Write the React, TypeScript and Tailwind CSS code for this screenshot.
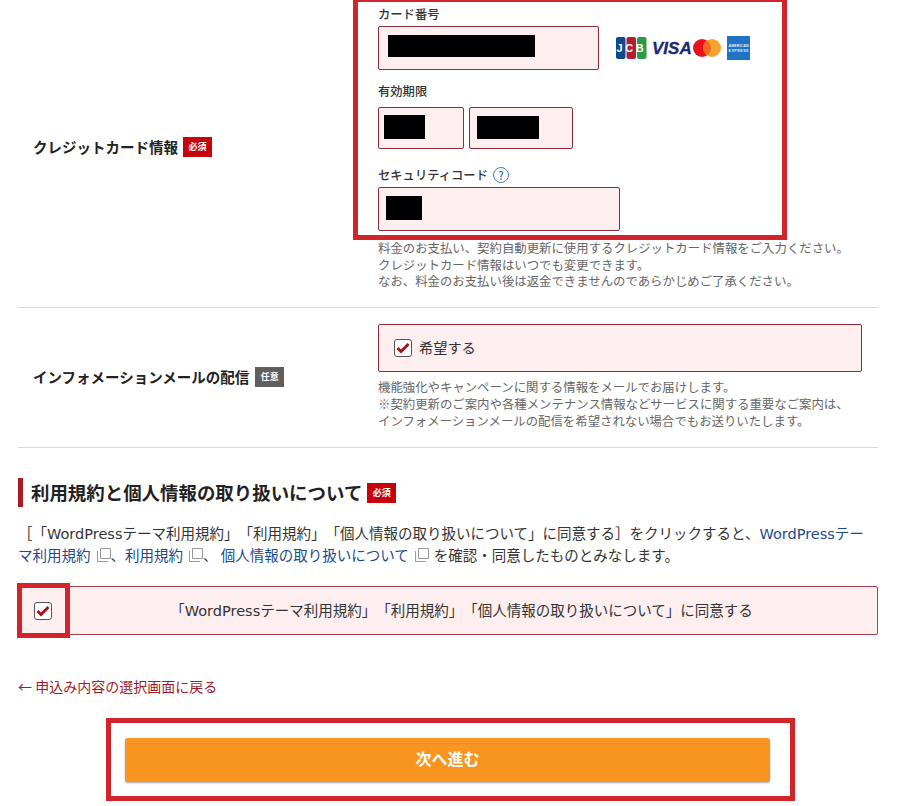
const font = { fontFamily: '"Noto Sans CJK JP", "Liberation Sans", sans-serif' }

function Badge({ label, gray }: { label: string; gray?: boolean }) {
  return (
    <span className={`inline-flex items-center justify-center w-[29px] h-[20px] text-[9px] font-bold text-white leading-none ${gray ? 'bg-[#5f5f5f]' : 'bg-[#c4030d]'}`}>
      {label}
    </span>
  )
}

function Field({ className, block }: { className: string; block: string }) {
  return (
    <div className={`relative border border-[#8e2b38] rounded-[2px] bg-[#fdeeef] ${className}`}>
      <div className={`absolute bg-black ${block}`} />
    </div>
  )
}

function Check({ className = '' }: { className?: string }) {
  return (
    <span className={`flex items-center justify-center w-[18px] h-[18px] shrink-0 rounded-[3px] border border-[#555] bg-white ${className}`}>
      <svg width="14" height="12" viewBox="0 0 14 12">
        <path d="M1.5 6 L5 9.5 L12.5 2" fill="none" stroke="#a8101c" strokeWidth="3" />
      </svg>
    </span>
  )
}

function ExtIcon({ className = '' }: { className?: string }) {
  return (
    <svg className={`inline-block ml-[6px] align-[-1px] ${className}`} width="14" height="14" viewBox="0 0 14 14">
      <path d="M3.5 0.5 H13.5 V10.5 H3.5 Z" fill="none" stroke="#9a9a9a" />
      <path d="M0.5 3 V13.5 H11" fill="none" stroke="#9a9a9a" />
    </svg>
  )
}

function Latin({ children }: { children: string }) {
  return <span className="font-['DejaVu_Sans'] text-[14.5px] leading-none">{children}</span>
}

function CardLogos() {
  return (
    <svg width="136" height="26" viewBox="0 0 136 26">
      <rect x="1" y="2" width="9.5" height="22" rx="2" fill="#0d4b8f" />
      <rect x="11.5" y="2" width="9.5" height="22" rx="2" fill="#b0202f" />
      <rect x="22" y="2" width="9.5" height="22" rx="2" fill="#2f9a45" />
      <text x="16.5" y="17" textAnchor="middle" fontSize="11" fontWeight="700" fill="#fff" letterSpacing="2.6" fontFamily="Liberation Sans">JCB</text>
      <text x="37" y="19" fontSize="17" fontWeight="700" fontStyle="italic" fill="#1a2a6c" stroke="#1a2a6c" strokeWidth="0.3" fontFamily="Liberation Sans">VISA</text>
      <circle cx="87" cy="13" r="9" fill="#e8101a" />
      <circle cx="97" cy="13" r="9" fill="#f6a331" />
      <path d="M92 5.5 A9 9 0 0 1 92 20.5 A9 9 0 0 1 92 5.5 Z" fill="#f4691f" />
      <rect x="112" y="1" width="23" height="24" fill="#1f72c4" />
      <text x="113.5" y="12" fontSize="3.6" fontWeight="700" fill="#e4eff9" textLength="20" fontFamily="Liberation Sans">AMERICAN</text>
      <text x="113.5" y="17" fontSize="3.6" fontWeight="700" fill="#e4eff9" textLength="20" fontFamily="Liberation Sans">EXPRESS</text>
    </svg>
  )
}

export default function App() {
  return (
    <div className="relative w-[903px] h-[806px] overflow-hidden bg-white text-[#333] [text-spacing-trim:space-all]" style={font}>
      <div className="ml-[18px] w-[860px]">
        <div className="flex h-[308px] border-b border-[#d9d9d9]">
          <div className="w-[360px] shrink-0 pl-[15px] flex items-center gap-[5px] pb-[14px]">
            <span className="text-[14.5px] font-bold text-[#222]">クレジットカード情報</span>
            <Badge label="必須" />
          </div>
          <div className="pt-[6px]">
            <p className="text-[12.3px] leading-[16px] font-medium">カード番号</p>
            <div className="flex items-center mt-[4px]">
              <Field className="w-[221px] h-[44px]" block="left-[9px] top-[8px] w-[147px] h-[22px]" />
              <div className="ml-[16px]"><CardLogos /></div>
            </div>
            <p className="mt-[13px] text-[12.3px] leading-[16px] font-medium">有効期限</p>
            <div className="flex gap-[5px] mt-[8px]">
              <Field className="w-[86px] h-[42px]" block="left-[5px] top-[7px] w-[41px] h-[24px]" />
              <Field className="w-[104px] h-[42px]" block="left-[7px] top-[8px] w-[62px] h-[23px]" />
            </div>
            <p className="mt-[17px] text-[12.3px] leading-[18px] font-medium flex items-center gap-[5px]">
              セキュリティコード
              <span className="flex items-center justify-center w-[16px] h-[16px] rounded-full border border-[#4a7fa8] text-[11px] leading-none text-[#2a6a9a]">?</span>
            </p>
            <Field className="w-[242px] h-[44px] mt-[3px]" block="left-[7px] top-[8px] w-[36px] h-[24px]" />
            <div className="mt-[9px] text-[12.4px] leading-[16.5px] text-[#666] whitespace-nowrap">
              <p>料金のお支払い、契約自動更新に使用するクレジットカード情報をご入力ください。</p>
              <p>クレジットカード情報はいつでも変更できます。</p>
              <p>なお、料金のお支払い後は返金できませんのであらかじめご了承ください。</p>
            </div>
          </div>
        </div>

        <div className="flex h-[140px] border-b border-[#d9d9d9]">
          <div className="w-[360px] shrink-0 pl-[15px] flex items-center gap-[6px] pb-[2px]">
            <span className="text-[14.5px] font-bold text-[#222]">インフォメーションメールの配信</span>
            <Badge label="任意" gray />
          </div>
          <div className="pt-[16px]">
            <div className="flex items-center gap-[7px] w-[484px] h-[48px] pl-[15px] pb-[1px] border border-[#8e2b38] rounded-[2px] bg-[#fdeeef]">
              <Check />
              <span className="text-[14.2px]">希望する</span>
            </div>
            <div className="mt-[7px] text-[12.4px] leading-[17px] text-[#666] whitespace-nowrap">
              <p>機能強化やキャンペーンに関する情報をメールでお届けします。</p>
              <p>※契約更新のご案内や各種メンテナンス情報などサービスに関する重要なご案内は、</p>
              <p>インフォメーションメールの配信を希望されない場合でもお送りいたします。</p>
            </div>
          </div>
        </div>

        <div className="flex items-center mt-[30px] h-[29px] border-l-[5px] border-[#a81b25] pl-[8px] gap-[5px]">
          <h2 className="text-[18.45px] font-bold text-[#222]">利用規約と個人情報の取り扱いについて</h2>
          <Badge label="必須" />
        </div>

        <div className="mt-[15px] text-[14.5px] leading-[22px] text-[#333] whitespace-nowrap">
          <p>［「<Latin>WordPress</Latin>テーマ利用規約」「利用規約」「個人情報の取り扱いについて」に同意する］をクリックすると、<span className="text-[#1c4a8c]"><Latin>WordPress</Latin>テー</span></p>
          <p>
            <span className="text-[#1c4a8c]">マ利用規約</span><ExtIcon />、<span className="text-[#1c4a8c]">利用規約</span><ExtIcon />、 <span className="text-[#1c4a8c]">個人情報の取り扱いについて</span><ExtIcon className="mr-[5px]" />を確認・同意したものとみなします。
          </p>
        </div>

        <div className="flex items-center mt-[20px] h-[49px] border border-[#a8404f] rounded-[2px] bg-[#fdeeef]">
          <Check className="ml-[15px]" />
          <span className="flex-1 text-center text-[14.5px] whitespace-nowrap pr-[6px] pb-[2px]">「<Latin>WordPress</Latin>テーマ利用規約」「利用規約」「個人情報の取り扱いについて」に同意する</span>
        </div>

        <p className="mt-[41px] text-[14px] leading-[20px] text-[#a31a2a]">← 申込み内容の選択画面に戻る</p>

        <div className="mt-[42px] ml-[107px] w-[645px] h-[44px] pb-[4px] flex items-center justify-center rounded-[3px] bg-[#f89520] shadow-[0_1px_2px_rgba(0,0,0,0.35)] text-[16px] font-bold text-white">
          次へ進む
        </div>
      </div>

      {/* 赤枠の注釈 */}
      <div className="absolute left-[353px] top-[-3px] w-[434px] h-[243px] border-[5px] border-[#d3232b] pointer-events-none" />
      <div className="absolute left-[17px] top-[583px] w-[53px] h-[55px] border-[5px] border-[#d3232b] pointer-events-none" />
      <div className="absolute left-[106px] top-[718px] w-[689px] h-[83px] border-[5px] border-[#d3232b] pointer-events-none" />
    </div>
  )
}
